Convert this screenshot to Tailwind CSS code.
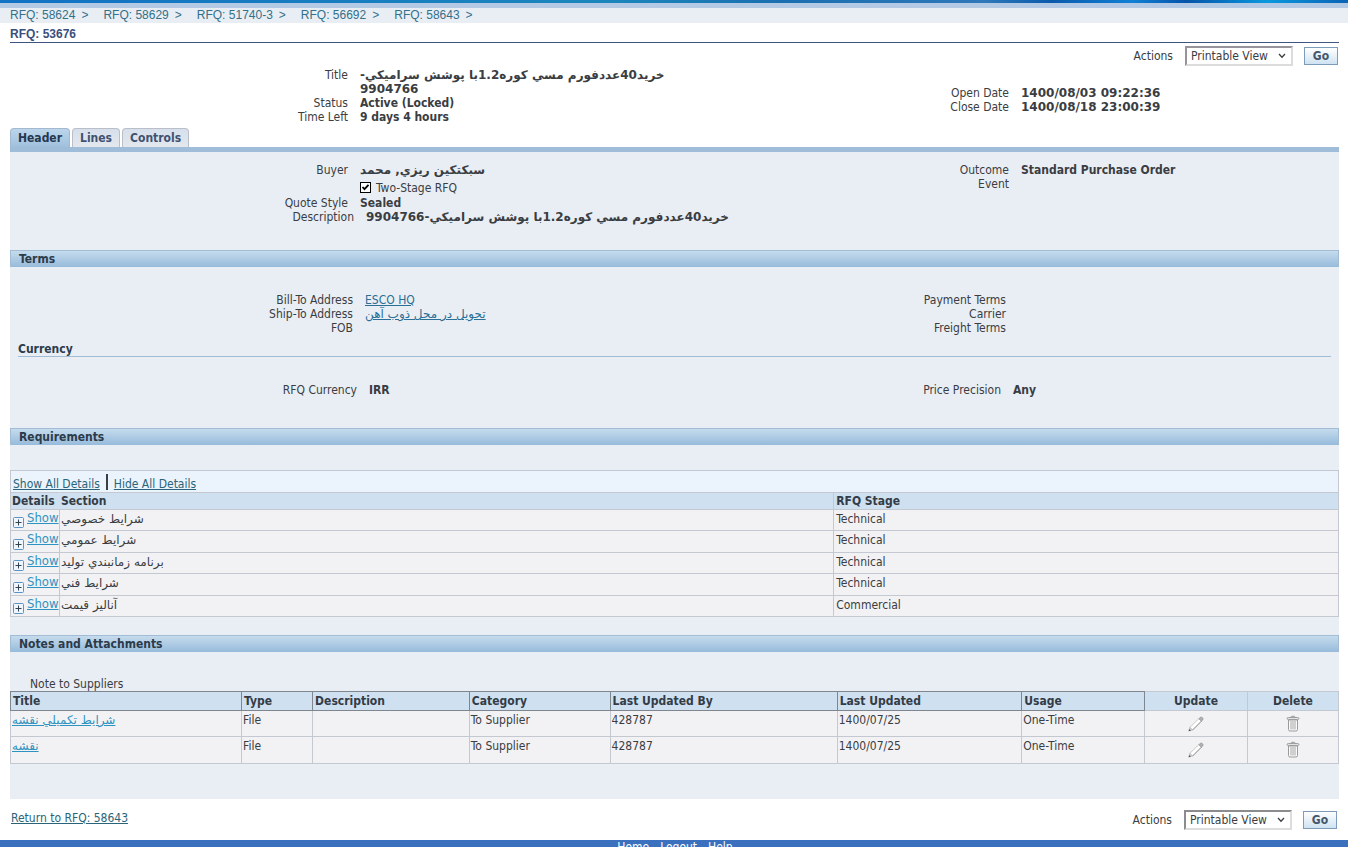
<!DOCTYPE html>
<html lang="en">
<head>
<meta charset="utf-8">
<meta name="viewport" content="width=device-width, initial-scale=1">
<title>RFQ: 53676</title>
<script src="https://cdn.jsdelivr.net/npm/@tailwindcss/browser@4"></script>
</head>
<body class="bg-white font-['DejaVu_Sans_Condensed','DejaVu_Sans',sans-serif] text-[12px] leading-[14px] text-[#3a3d42]">
<svg class="hidden" aria-hidden="true">
  <symbol id="plus" viewBox="0 0 11 11">
    <rect x=".5" y=".5" width="10" height="10" rx="1" fill="#eef7ff" stroke="#5b93c4"/>
    <path d="M2.500 5.500h6M5.500 2.500v6" stroke="#33414e" fill="none"/>
  </symbol>
  <symbol id="pencil" viewBox="0 0 16 16">
    <path d="M1.800 11.400 10.800 2.700l2.600 2.500L4.600 14z" fill="#fff" stroke="#b4b4b4" stroke-width=".7"/>
    <path d="M4.600 14 13.400 5.200" stroke="#8f8f8f" stroke-width=".9" fill="none"/>
    <path d="M10.800 2.700 12 1.400q1.200-.9 2.400.2t.4 2.300L13.400 5.200z" fill="#b0b0b0" stroke="#909090" stroke-width=".6"/>
    <path d="M1.800 11.400.8 15l3.800-1z" fill="#dcdcdc" stroke="#a5a5a5" stroke-width=".5"/>
    <path d="M.6 15.300 1.200 12.900l1.900 1.700z" fill="#555"/>
  </symbol>
  <symbol id="trash" viewBox="0 0 14 17">
    <path d="M2.500 5h9v9.500q0 1.500-1.500 1.500H4q-1.500 0-1.500-1.500z" fill="#fafafa" stroke="#9a9a9a"/>
    <path d="M5 6v8.500M7 6v8.500M9 6v8.500" stroke="#a6a6a6" fill="none"/>
    <path d="M1 3.500q0-1 1.500-1h9q1.500 0 1.500 1t-1.500 1h-9Q1 4.500 1 3.500z" fill="#e2e2e2" stroke="#969696" stroke-width=".9"/>
    <path d="M4.500 2.300Q5 1.200 7 1.200t2.500 1.100" stroke="#969696" fill="none"/>
  </symbol>
  <symbol id="chevron" viewBox="0 0 8 6"><path d="M1 1l3 3.200L7 1" fill="none" stroke="#3a3d42" stroke-width="1.300"/></symbol>
</svg>

<header>
  <div class="h-[3px] bg-[linear-gradient(90deg,#1272c4,#1b86bd_45%,#1a6fb0_58%,#2f78ba_73%,#0a5aac_78%,#1080d4_84%,#0654a8_88%,#0a98de_94%,#0a63b4)]"></div>
  <div class="h-[5px] bg-[#b4c9e3]"></div>
  <nav aria-label="Breadcrumb" class="flex h-[15px] gap-[15px] bg-[#e9eef5] pl-[10px] font-['Liberation_Sans',sans-serif] text-[#33708a]">
    <span class="flex gap-[6px]"><a href="#">RFQ: 58624</a>&gt;</span>
    <span class="flex gap-[6px]"><a href="#">RFQ: 58629</a>&gt;</span>
    <span class="flex gap-[6px]"><a href="#">RFQ: 51740-3</a>&gt;</span>
    <span class="flex gap-[6px]"><a href="#">RFQ: 56692</a>&gt;</span>
    <span class="flex gap-[6px]"><a href="#">RFQ: 58643</a>&gt;</span>
  </nav>
</header>

<main class="mr-[9px] ml-[10px]">
  <h1 class="h-5 border-b border-[#3f5480] pt-1 font-['Liberation_Sans',sans-serif] font-bold text-[#3a4f7d]">RFQ: 53676</h1>
  <form class="flex h-[25px] items-center justify-end pr-px">
    <label for="act1" class="mr-3">Actions</label>
    <span class="mr-[11px] grid items-center">
      <select id="act1" class="col-start-1 row-start-1 h-5 w-[108px] appearance-none border-2 border-t-[#96939a] border-r-[#dcdcdc] border-b-[#dcdcdc] border-l-[#96939a] bg-white pl-1"><option>Printable View</option></select>
      <svg class="pointer-events-none col-start-1 row-start-1 mr-[7px] h-[6px] w-2 justify-self-end"><use href="#chevron"/></svg>
    </span>
    <button type="button" class="h-[18px] w-[34px] border border-[#7d9cba] bg-linear-to-b from-white to-[#cfe3f2] font-bold text-[#46566b]">Go</button>
  </form>

  <section class="grid grid-cols-[338fr_331fr_330fr_330fr] pb-1">
    <dl class="col-span-2 grid grid-cols-[338fr_331fr]">
      <dt class="text-right">Title</dt><dd class="pl-3 font-['DejaVu_Sans',sans-serif] font-bold">خريد40عددفورم مسي کوره1.2با پوشش سراميکي-<wbr>9904766</dd>
      <dt class="text-right">Status</dt><dd class="pl-3 font-bold">Active (Locked)</dd>
      <dt class="text-right">Time Left</dt><dd class="pl-3 font-bold">9 days 4 hours</dd>
    </dl>
    <dl class="col-span-2 grid grid-cols-2 content-end pb-[10px]">
      <dt class="text-right">Open Date</dt><dd class="pl-3 font-['DejaVu_Sans',sans-serif] font-bold">1400/08/03 09:22:36</dd>
      <dt class="text-right">Close Date</dt><dd class="pl-3 font-['DejaVu_Sans',sans-serif] font-bold">1400/08/18 23:00:39</dd>
    </dl>
  </section>

  <nav aria-label="RFQ sections" class="flex border-b-[5px] border-[#9fbdd8] font-bold">
    <a href="#" aria-current="page" class="mr-[2px] h-[19px] rounded-t-[4px] border border-b-0 border-[#a3b9cf] bg-linear-to-b from-[#bcd6eb] to-[#9fc0dd] px-[7px] pt-[2px] text-[#26384f]">Header</a>
    <a href="#" class="mr-[2px] h-[19px] rounded-t-[4px] border border-b-0 border-[#b9bec8] bg-linear-to-b from-[#d6e0ec] to-[#e4e7ed] px-[7px] pt-[2px] text-[#3f5272]">Lines</a>
    <a href="#" class="h-[19px] rounded-t-[4px] border border-b-0 border-[#b9bec8] bg-linear-to-b from-[#d6e0ec] to-[#e4e7ed] px-[7px] pt-[2px] text-[#3f5272]">Controls</a>
  </nav>

  <div class="bg-[#e9eef5] pb-[35px]">
    <section class="pt-[11px] pb-[26px]">
      <div class="grid grid-cols-[338fr_331fr_330fr_330fr]">
        <dl class="col-span-2 grid grid-cols-[338fr_331fr]">
          <dt class="text-right">Buyer</dt><dd class="pl-3 font-['DejaVu_Sans',sans-serif] font-bold">سبکتکين ريزي, محمد</dd>
          <dd class="col-start-2 flex h-[19px] items-center pt-[2px] pl-3">
            <span class="mr-[5px] grid">
              <input id="twostage" type="checkbox" checked class="col-start-1 row-start-1 size-[11px] appearance-none border border-black bg-white">
              <svg class="pointer-events-none col-start-1 row-start-1 size-[11px]" viewBox="0 0 11 11"><path d="M2.500 5l2 2.200 4-4.400" fill="none" stroke="#000" stroke-width="1.800"/></svg>
            </span>
            <label for="twostage">Two-Stage RFQ</label>
          </dd>
          <dt class="text-right">Quote Style</dt><dd class="pl-3 font-bold">Sealed</dd>
        </dl>
        <dl class="col-span-2 grid grid-cols-2 content-start">
          <dt class="text-right">Outcome</dt><dd class="pl-3 font-bold">Standard Purchase Order</dd>
          <dt class="text-right">Event</dt><dd></dd>
        </dl>
      </div>
      <dl class="grid grid-cols-[344fr_985fr]">
        <dt class="text-right">Description</dt><dd class="pl-3 font-['DejaVu_Sans',sans-serif] font-bold">خريد40عددفورم مسي کوره1.2با پوشش سراميکي-9904766</dd>
      </dl>
    </section>

    <section>
      <h2 class="h-[17px] border border-b-0 border-[#a3bcd5] bg-linear-to-b from-[#c5dbed] to-[#97bbdb] pt-px pl-2 font-bold text-[#2c3b4a]">Terms</h2>
      <div class="grid grid-cols-[343fr_326fr_327fr_333fr] pt-[26px]">
        <dl class="col-span-2 grid grid-cols-[343fr_326fr]">
          <dt class="text-right">Bill-To Address</dt><dd class="pl-3"><a href="#" class="text-[#2a6f95] underline">ESCO HQ</a></dd>
          <dt class="text-right">Ship-To Address</dt><dd class="pl-3 font-['DejaVu_Sans',sans-serif]"><a href="#" class="text-[#2a6f95] underline">تحويل در محل ذوب آهن</a></dd>
          <dt class="text-right">FOB</dt><dd></dd>
        </dl>
        <dl class="col-span-2 grid grid-cols-[327fr_333fr]">
          <dt class="text-right">Payment Terms</dt><dd></dd>
          <dt class="text-right">Carrier</dt><dd></dd>
          <dt class="text-right">Freight Terms</dt><dd></dd>
        </dl>
      </div>
      <h3 class="mx-2 mt-2 border-b border-[#a3bcd5] leading-[13px] font-bold text-[#2c3b4a]">Currency</h3>
      <dl class="grid grid-cols-[347fr_322fr_322fr_338fr] pt-[26px] pb-[31px]">
        <dt class="text-right">RFQ Currency</dt><dd class="pl-3 font-bold">IRR</dd>
        <dt class="text-right">Price Precision</dt><dd class="pl-3 font-bold">Any</dd>
      </dl>
    </section>

    <section>
      <h2 class="h-[17px] border border-b-0 border-[#a3bcd5] bg-linear-to-b from-[#c5dbed] to-[#97bbdb] pt-px pl-2 font-bold text-[#2c3b4a]">Requirements</h2>
      <div class="mt-[25px] flex h-[22px] items-center border border-b-0 border-[#c4c8d0] bg-[#ebf4fd] pt-1 pl-[2px] text-[#2a6478]">
        <a href="#" class="underline">Show All Details</a>
        <span class="mx-[6px] mb-1 h-4 w-[2px] bg-[#3a3d42]"></span>
        <a href="#" class="underline">Hide All Details</a>
      </div>
      <table class="w-full table-fixed border-collapse bg-[#f2f2f4]">
        <colgroup><col class="w-[49px]"><col class="w-[58.300%]"><col></colgroup>
        <thead>
          <tr class="h-[17px] bg-[#cfe0f0] text-left text-[#333c46]">
            <th scope="col" class="border border-[#c4c8d0] border-r-[#cfe0f0] p-0 pl-px">Details</th>
            <th scope="col" class="border border-[#c4c8d0] p-0 pl-px">Section</th>
            <th scope="col" class="border border-[#c4c8d0] p-0 pl-[2px]">RFQ Stage</th>
          </tr>
        </thead>
        <tbody class="align-top">
          <tr class="h-[21px]"><td class="border border-[#c4c8d0] p-0 pt-px pl-[2px]"><a href="#" class="flex gap-[3px] text-[13px] text-[#2f93c2] underline"><svg class="mt-[6px] size-[11px]"><use href="#plus"/></svg>Show</a></td><td class="border border-[#c4c8d0] p-0 pt-[2px] pl-px font-['DejaVu_Sans',sans-serif]">شرايط خصوصي</td><td class="border border-[#c4c8d0] p-0 pt-[2px] pl-[2px]">Technical</td></tr>
          <tr class="h-[22px]"><td class="border border-[#c4c8d0] p-0 pt-px pl-[2px]"><a href="#" class="flex gap-[3px] text-[13px] text-[#2f93c2] underline"><svg class="mt-[7px] size-[11px]"><use href="#plus"/></svg>Show</a></td><td class="border border-[#c4c8d0] p-0 pt-[2px] pl-px font-['DejaVu_Sans',sans-serif]">شرايط عمومي</td><td class="border border-[#c4c8d0] p-0 pt-[2px] pl-[2px]">Technical</td></tr>
          <tr class="h-[21px]"><td class="border border-[#c4c8d0] p-0 pt-px pl-[2px]"><a href="#" class="flex gap-[3px] text-[13px] text-[#2f93c2] underline"><svg class="mt-[6px] size-[11px]"><use href="#plus"/></svg>Show</a></td><td class="border border-[#c4c8d0] p-0 pt-[2px] pl-px font-['DejaVu_Sans',sans-serif]">برنامه زمانبندي توليد</td><td class="border border-[#c4c8d0] p-0 pt-[2px] pl-[2px]">Technical</td></tr>
          <tr class="h-[22px]"><td class="border border-[#c4c8d0] p-0 pt-px pl-[2px]"><a href="#" class="flex gap-[3px] text-[13px] text-[#2f93c2] underline"><svg class="mt-[7px] size-[11px]"><use href="#plus"/></svg>Show</a></td><td class="border border-[#c4c8d0] p-0 pt-[2px] pl-px font-['DejaVu_Sans',sans-serif]">شرايط فني</td><td class="border border-[#c4c8d0] p-0 pt-[2px] pl-[2px]">Technical</td></tr>
          <tr class="h-[21px]"><td class="border border-[#c4c8d0] p-0 pt-px pl-[2px]"><a href="#" class="flex gap-[3px] text-[13px] text-[#2f93c2] underline"><svg class="mt-[6px] size-[11px]"><use href="#plus"/></svg>Show</a></td><td class="border border-[#c4c8d0] p-0 pt-[2px] pl-px font-['DejaVu_Sans',sans-serif]">آناليز قيمت</td><td class="border border-[#c4c8d0] p-0 pt-[2px] pl-[2px]">Commercial</td></tr>
        </tbody>
      </table>
    </section>

    <section class="pt-[18px]">
      <h2 class="h-[17px] border border-b-0 border-[#a3bcd5] bg-linear-to-b from-[#c5dbed] to-[#97bbdb] pt-px pl-2 font-bold text-[#2c3b4a]">Notes and Attachments</h2>
      <p class="pt-[26px] pl-5 leading-[13px]">Note to Suppliers</p>
      <table class="w-full table-fixed border-collapse bg-[#f2f2f4]">
        <colgroup><col class="w-[17.400%]"><col class="w-[5.350%]"><col class="w-[11.800%]"><col class="w-[10.600%]"><col class="w-[17.100%]"><col class="w-[13.900%]"><col class="w-[9.250%]"><col class="w-[7.750%]"><col></colgroup>
        <thead>
          <tr class="h-[19px] bg-[#cfe0f0] text-left text-[#333c46]">
            <th scope="col" class="border border-[#7f868e] p-0 pl-[2px]">Title</th>
            <th scope="col" class="border border-[#7f868e] p-0 pl-[2px]">Type</th>
            <th scope="col" class="border border-[#7f868e] p-0 pl-[2px]">Description</th>
            <th scope="col" class="border border-[#7f868e] p-0 pl-[2px]">Category</th>
            <th scope="col" class="border border-[#7f868e] p-0 pl-[2px]">Last Updated By</th>
            <th scope="col" class="border border-[#7f868e] p-0 pl-[2px]">Last Updated</th>
            <th scope="col" class="border border-[#7f868e] p-0 pl-[2px]">Usage</th>
            <th scope="col" class="border border-[#c4c8d0] p-0 text-center">Update</th>
            <th scope="col" class="border border-[#c4c8d0] p-0 text-center">Delete</th>
          </tr>
        </thead>
        <tbody class="align-top">
          <tr class="h-[26px]">
            <td class="border border-[#c4c8d0] p-0 pt-[2px] pl-px font-['DejaVu_Sans',sans-serif]"><a href="#" class="text-[#2f93c2] underline">شرايط تکميلي نقشه</a></td>
            <td class="border border-[#c4c8d0] p-0 pt-[2px] pl-px">File</td>
            <td class="border border-[#c4c8d0] p-0"></td>
            <td class="border border-[#c4c8d0] p-0 pt-[2px] pl-px">To Supplier</td>
            <td class="border border-[#c4c8d0] p-0 pt-[2px] pl-px">428787</td>
            <td class="border border-[#c4c8d0] p-0 pt-[2px] pl-px">1400/07/25</td>
            <td class="border border-[#c4c8d0] p-0 pt-[2px] pl-px">One-Time</td>
            <td class="border border-[#c4c8d0] p-0 pt-[5px]"><button type="button" aria-label="Update" class="mx-auto block"><svg class="size-4"><use href="#pencil"/></svg></button></td>
            <td class="border border-[#c4c8d0] p-0 pt-1"><button type="button" aria-label="Delete" class="mx-auto block"><svg class="h-[17px] w-[14px]"><use href="#trash"/></svg></button></td>
          </tr>
          <tr class="h-[27px]">
            <td class="border border-[#c4c8d0] p-0 pt-[2px] pl-px font-['DejaVu_Sans',sans-serif]"><a href="#" class="text-[#2f93c2] underline">نقشه</a></td>
            <td class="border border-[#c4c8d0] p-0 pt-[2px] pl-px">File</td>
            <td class="border border-[#c4c8d0] p-0"></td>
            <td class="border border-[#c4c8d0] p-0 pt-[2px] pl-px">To Supplier</td>
            <td class="border border-[#c4c8d0] p-0 pt-[2px] pl-px">428787</td>
            <td class="border border-[#c4c8d0] p-0 pt-[2px] pl-px">1400/07/25</td>
            <td class="border border-[#c4c8d0] p-0 pt-[2px] pl-px">One-Time</td>
            <td class="border border-[#c4c8d0] p-0 pt-[5px]"><button type="button" aria-label="Update" class="mx-auto block"><svg class="size-4"><use href="#pencil"/></svg></button></td>
            <td class="border border-[#c4c8d0] p-0 pt-1"><button type="button" aria-label="Delete" class="mx-auto block"><svg class="h-[17px] w-[14px]"><use href="#trash"/></svg></button></td>
          </tr>
        </tbody>
      </table>
    </section>
  </div>

  <form class="flex items-center pt-[11px] pr-[2px] pb-[10px]">
    <a href="#" class="mr-auto pb-1 pl-px text-[#2a6478] underline">Return to RFQ: 58643</a>
    <label for="act2" class="mr-3">Actions</label>
    <span class="mr-[11px] grid items-center">
      <select id="act2" class="col-start-1 row-start-1 h-5 w-[108px] appearance-none border-2 border-t-[#8c8c8e] border-r-[#dcdcdc] border-b-[#dcdcdc] border-l-[#8c8c8e] bg-white pl-1"><option>Printable View</option></select>
      <svg class="pointer-events-none col-start-1 row-start-1 mr-[7px] h-[6px] w-2 justify-self-end"><use href="#chevron"/></svg>
    </span>
    <button type="button" class="h-[18px] w-[34px] border border-[#7d9cba] bg-linear-to-b from-white to-[#cfe3f2] font-bold text-[#46566b]">Go</button>
  </form>
</main>

<footer class="flex justify-center gap-[11px] bg-[#3a70bd] pb-2 pl-[2px] text-white">
  <a href="#">Home</a><a href="#">Logout</a><a href="#">Help</a>
</footer>
</body>
</html>
